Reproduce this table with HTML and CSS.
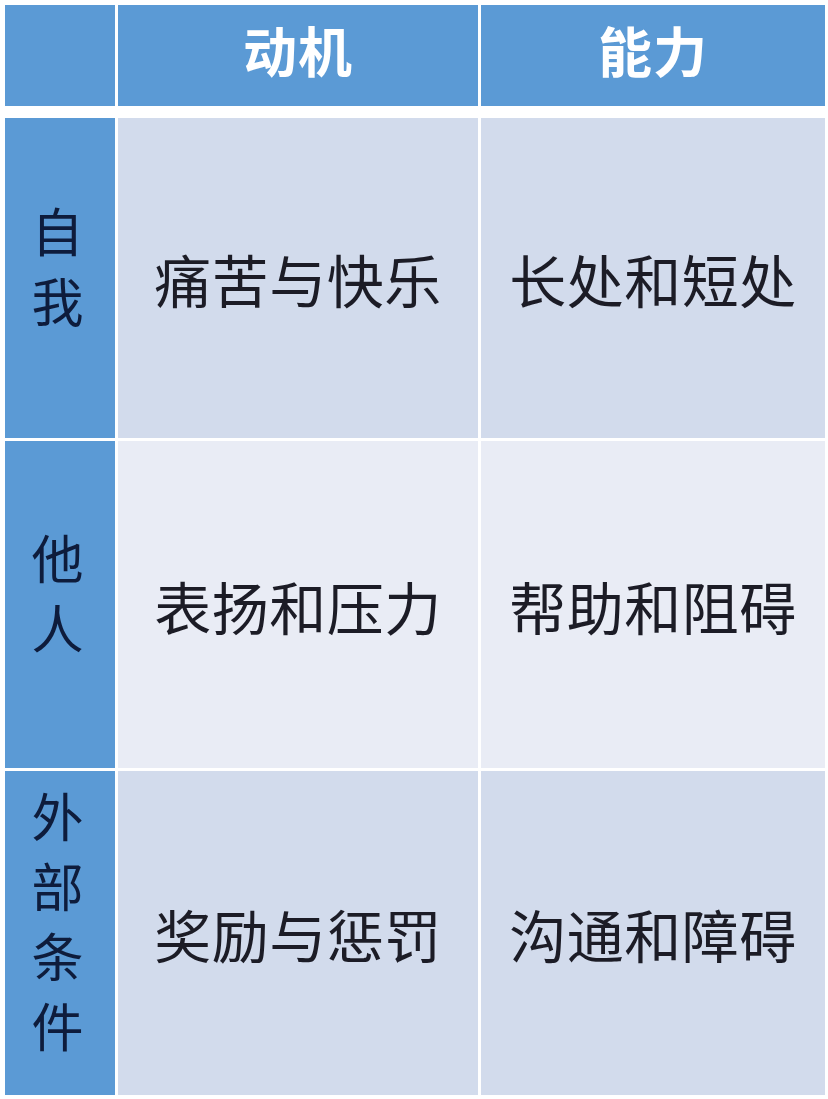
FILE: index.html
```html
<!DOCTYPE html>
<html lang="zh-CN">
<head>
<meta charset="utf-8">
<title>动机与能力</title>
<link rel="stylesheet" href="styles.css">
</head>
<body>
<div class="matrix">
  <div class="cell corner"></div>
  <div class="cell head">动机</div>
  <div class="cell head">能力</div>

  <div class="cell side"><span class="vtext">自<br>我</span></div>
  <div class="cell body odd">痛苦与快乐</div>
  <div class="cell body odd">长处和短处</div>

  <div class="cell side"><span class="vtext">他<br>人</span></div>
  <div class="cell body even">表扬和压力</div>
  <div class="cell body even">帮助和阻碍</div>

  <div class="cell side"><span class="vtext">外<br>部<br>条<br>件</span></div>
  <div class="cell body odd">奖励与惩罚</div>
  <div class="cell body odd">沟通和障碍</div>
</div>
</body>
</html>
```
FILE: styles.css
```css
html, body {
  margin: 0;
  padding: 0;
  background: #ffffff;
}

body {
  font-family: "Noto Sans CJK SC", "Noto Sans", sans-serif;
  width: 828px;
  height: 1099px;
  overflow: hidden;
}

.matrix {
  display: grid;
  grid-template-columns: 110px 360px 344px;
  grid-template-rows: 110px 320px 327px 324px;
  column-gap: 3px;
  row-gap: 3px;
  padding: 5px 3px 4px 5px;
}

.matrix > .head,
.matrix > .corner {
  margin-bottom: 9px;
}

.cell {
  display: flex;
  align-items: center;
  justify-content: center;
}

.corner {
  background: #5b9ad5;
}

.head {
  background: #5b9ad5;
  color: #ffffff;
  font-weight: 700;
  font-size: 54px;
  letter-spacing: 1px;
  padding-bottom: 12px;
  box-sizing: border-box;
}

.side {
  background: #5b9ad5;
  color: #0e1c3c;
  font-size: 52px;
  padding-bottom: 26px;
  box-sizing: border-box;
}

.vtext {
  line-height: 70px;
  text-align: center;
  display: block;
  margin-left: -5px;
}

.body {
  color: #1c1c26;
  font-size: 57px;
  letter-spacing: 0.5px;
}

.odd {
  background: #d2dbec;
}

.even {
  background: #e9ecf5;
}
```
